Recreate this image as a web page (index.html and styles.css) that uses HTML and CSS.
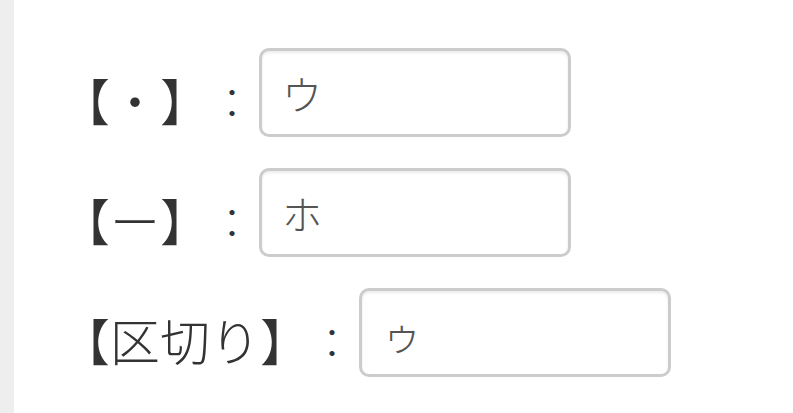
FILE: index.html
```html
<!DOCTYPE html>
<html lang="ja">
<head>
<meta charset="utf-8">
<link rel="stylesheet" href="styles.css">
</head>
<body>
<div class="strip"></div>
<main class="form">
  <div class="row">
    <span class="label">【・】</span><span class="colon">：</span>
    <input class="field" type="text" value="ウ" readonly>
  </div>
  <div class="row">
    <span class="label">【ー】</span><span class="colon">：</span>
    <input class="field" type="text" value="ホ" readonly>
  </div>
  <div class="row">
    <span class="label">【区切り】</span><span class="colon">：</span>
    <input class="field" type="text" value="ゥ" readonly>
  </div>
</main>
</body>
</html>
```
FILE: styles.css
```css
html, body {
  margin: 0;
  padding: 0;
  background: #ffffff;
}
body {
  display: flex;
  width: 793px;
  height: 413px;
  overflow: hidden;
  font-family: "Noto Sans CJK JP", "Noto Sans", sans-serif;
}
.strip {
  width: 14px;
  background: #eeeeee;
  flex: none;
}
.form {
  display: flex;
  flex-direction: column;
  gap: 31px;
  padding: 48px 0 0 46px;
}
.row {
  display: flex;
  align-items: center;
  height: 89px;
}
.label {
  font-size: 50px;
  font-weight: 300;
  line-height: 1;
  color: #333333;
  padding-top: 12px;
}
.colon {
  font-size: 40px;
  font-weight: 300;
  line-height: 1;
  color: #333333;
  padding-top: 16px;
  margin-left: 2px;
}
.field {
  box-sizing: border-box;
  width: 312px;
  height: 89px;
  margin: 0 0 0 7px;
  border: 3px solid #cccccc;
  border-radius: 10px;
  box-shadow: inset 0 2px 3px rgba(0, 0, 0, 0.08);
  padding: 0 0 0 20px;
  font-family: "Noto Sans CJK JP", "Noto Sans", sans-serif;
  font-size: 40px;
  font-weight: 300;
  color: #555555;
  background: #ffffff;
  outline: none;
}
```
